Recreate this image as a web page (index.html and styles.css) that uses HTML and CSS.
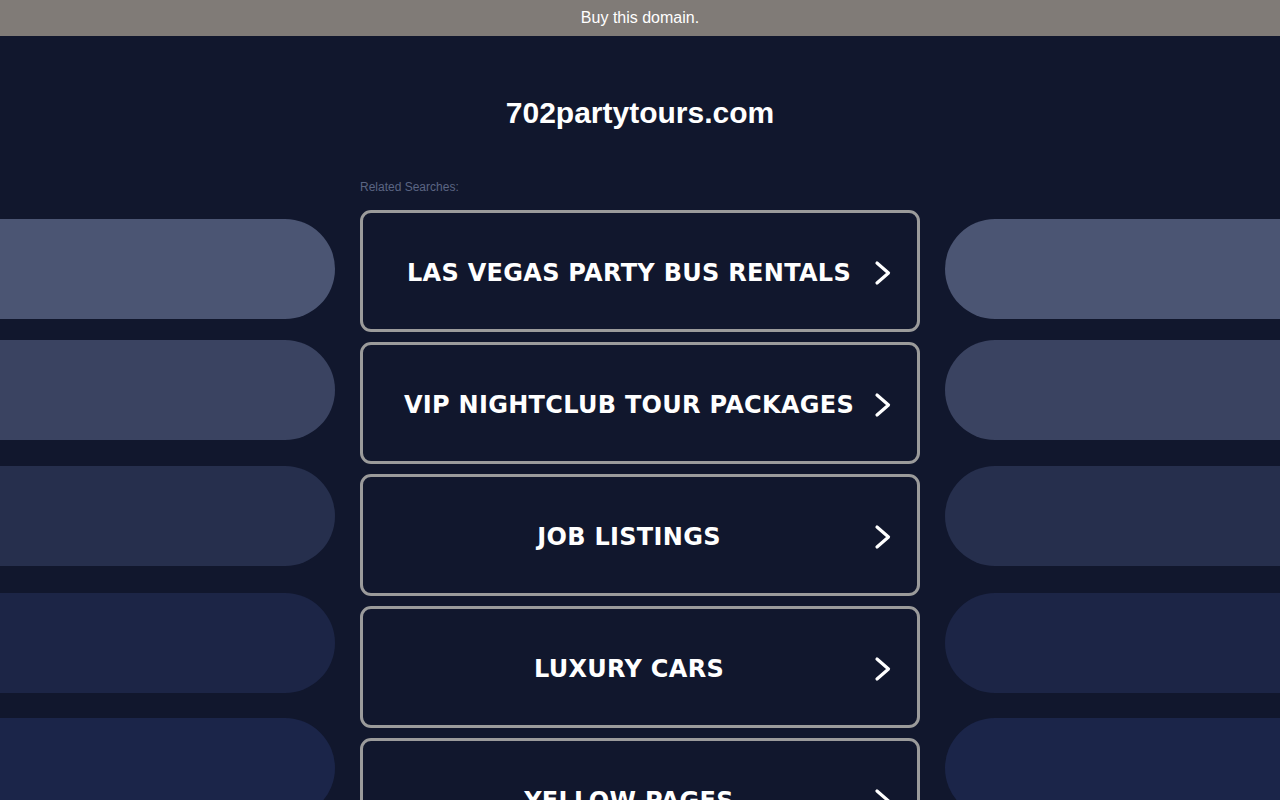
FILE: index.html
```html
<!DOCTYPE html>
<html>
<head>
<meta charset="utf-8">
<link rel="stylesheet" href="styles.css">
</head>
<body>
<div class="topbar">Buy this domain.</div>
<div class="main">
  <div class="side side-left">
    <div class="pill p1"></div>
    <div class="pill p2"></div>
    <div class="pill p3"></div>
    <div class="pill p4"></div>
    <div class="pill p5"></div>
  </div>
  <div class="center">
    <h1 class="title">702partytours.com</h1>
    <div class="related">Related Searches:</div>
    <div class="list">
      <a class="item"><span class="label">LAS VEGAS PARTY BUS RENTALS</span><svg class="chev" viewBox="0 0 18 26"><path d="M3 3 L14.5 13 L3 23" /></svg></a>
      <a class="item"><span class="label">VIP NIGHTCLUB TOUR PACKAGES</span><svg class="chev" viewBox="0 0 18 26"><path d="M3 3 L14.5 13 L3 23" /></svg></a>
      <a class="item"><span class="label">JOB LISTINGS</span><svg class="chev" viewBox="0 0 18 26"><path d="M3 3 L14.5 13 L3 23" /></svg></a>
      <a class="item"><span class="label">LUXURY CARS</span><svg class="chev" viewBox="0 0 18 26"><path d="M3 3 L14.5 13 L3 23" /></svg></a>
      <a class="item"><span class="label">YELLOW PAGES</span><svg class="chev" viewBox="0 0 18 26"><path d="M3 3 L14.5 13 L3 23" /></svg></a>
    </div>
  </div>
  <div class="side side-right">
    <div class="pill p1"></div>
    <div class="pill p2"></div>
    <div class="pill p3"></div>
    <div class="pill p4"></div>
    <div class="pill p5"></div>
  </div>
</div>
</body>
</html>
```

FILE: styles.css
```css
html, body {
  margin: 0;
  padding: 0;
  height: 100%;
  overflow: hidden;
}
body {
  background: #11172d;
  font-family: "Liberation Sans", Arial, sans-serif;
  color: #ffffff;
}
.topbar {
  height: 36px;
  background: #807b77;
  color: #ffffff;
  font-size: 16px;
  line-height: 35px;
  text-align: center;
}
.main {
  display: flex;
  justify-content: space-between;
}
.side {
  width: 335px;
  display: flex;
  flex-direction: column;
  padding-top: 183px;
}
.pill {
  height: 100px;
  flex: none;
}
.side-left .pill {
  border-radius: 0 50px 50px 0;
}
.side-right .pill {
  border-radius: 50px 0 0 50px;
}
.p1 { background: #4b5573; margin-bottom: 21px; }
.p2 { background: #3a4361; margin-bottom: 26px; }
.p3 { background: #262f4d; margin-bottom: 27px; }
.p4 { background: #1c2546; margin-bottom: 25px; }
.p5 { background: #1b2549; }
.center {
  width: 560px;
  display: flex;
  flex-direction: column;
}
.title {
  margin: 59px 0 0 0;
  font-size: 30px;
  line-height: 36px;
  font-weight: bold;
  text-align: center;
  font-family: "Liberation Sans", Arial, sans-serif;
}
.related {
  margin-top: 49px;
  font-size: 12px;
  line-height: 14px;
  color: #5b6583;
}
.list {
  margin-top: 16px;
  display: flex;
  flex-direction: column;
  gap: 10px;
}
.item {
  box-sizing: border-box;
  height: 122px;
  border: 3px solid #9b9b9b;
  border-radius: 11px;
  display: grid;
  grid-template-columns: 1fr 18px;
  align-items: center;
  padding: 3px 25px 0 21px;
  text-decoration: none;
}
.label {
  font-family: "DejaVu Sans", Verdana, sans-serif;
  font-weight: bold;
  font-size: 24px;
  color: #ffffff;
  letter-spacing: 0.3px;
  text-align: center;
  white-space: nowrap;
}
.chev {
  width: 18px;
  height: 26px;
}
.chev path {
  fill: none;
  stroke: #ffffff;
  stroke-width: 3.2;
  stroke-linecap: round;
  stroke-linejoin: round;
}
```
